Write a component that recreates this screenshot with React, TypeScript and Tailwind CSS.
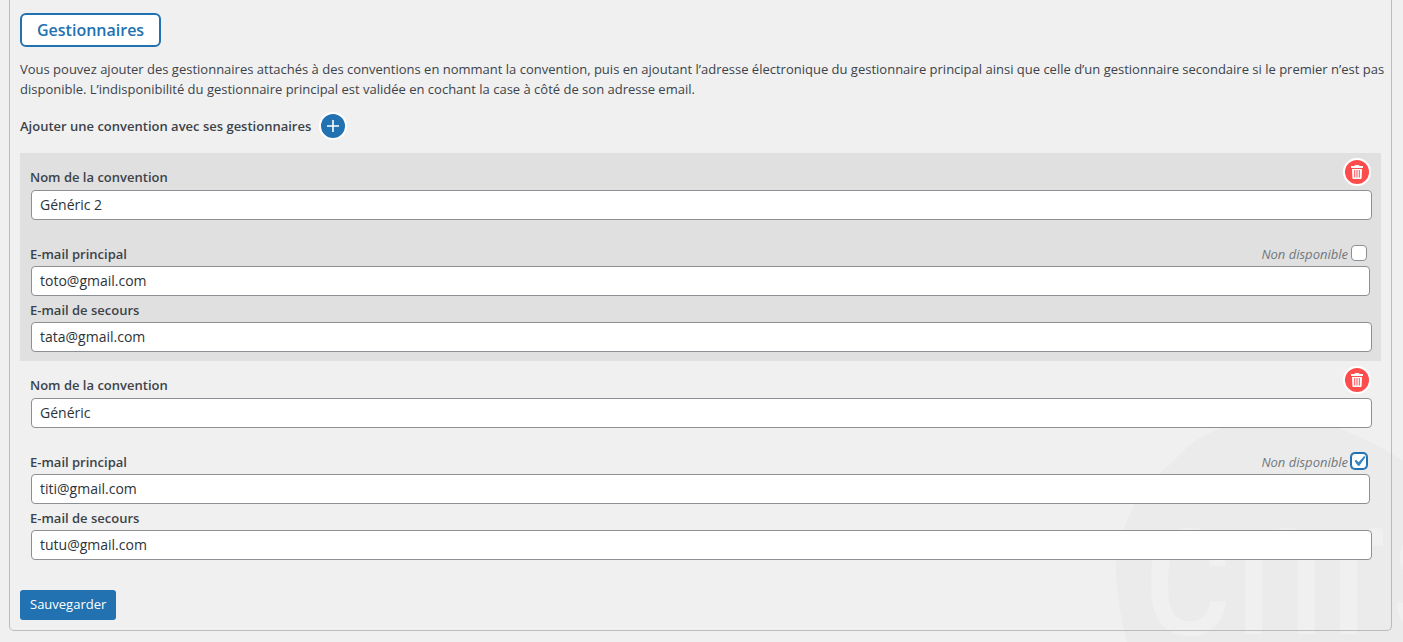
import { useState } from 'react';

type Convention = { id: number; name: string; main: string; backup: string; unavailable: boolean };

const initial: Convention[] = [
  { id: 1, name: 'Généric 2', main: 'toto@gmail.com', backup: 'tata@gmail.com', unavailable: false },
  { id: 2, name: 'Généric', main: 'titi@gmail.com', backup: 'tutu@gmail.com', unavailable: true },
];

const inputClass =
  'block h-[30px] w-full rounded-sm border border-[#8c8f94] bg-white px-2 pb-0.5 text-sm text-[#2c3338] outline-none';
const labelClass = 'text-[13px] leading-5 font-semibold';

function Watermark() {
  return (
    <svg aria-hidden="true" className="absolute right-0 bottom-0 h-[242px] w-[303px]" viewBox="0 0 303 242">
      <path
        fill="#ebebeb"
        d="M27 242C22 222 16 194 16 170C16 149 24 125 33 107C43 88 53 78 67 67C78 57 88 45 100 38C122 25 150 20 178 20C203 20 222 23 240 29C265 38 287 50 303 61V242Z"
      />
      <text x="42" y="234" fill="#f0f0f0" className="font-['Roboto_Condensed','Roboto',sans-serif] text-[196px] font-normal">
        cnrs
      </text>
    </svg>
  );
}

function TrashIcon() {
  return (
    <svg aria-hidden="true" className="size-4" viewBox="0 0 16 16" fill="#fff">
      <path
        fillRule="evenodd"
        d="M6 1h4l.5 1H14v2H2V2h3.500zM3 5h10l-.4 9.200q-.1.800-.9.800H4.300q-.8 0-.9-.8zM5.200 6v7.500h1V6zM7.500 6v7.500h1V6zM9.800 6v7.500h1V6z"
      />
    </svg>
  );
}

function ConventionBlock({ item, shaded, onDelete }: { item: Convention; shaded: boolean; onDelete: () => void }) {
  const id = `convention-${item.id}`;
  return (
    <div className={`${shaded ? 'bg-[#e0e0e0]' : ''} pt-[5px] pr-[9px] pb-[9px] pl-2.5`}>
      <div className="flex h-8 items-start justify-between pr-px">
        <label htmlFor={`${id}-name`} className={`${labelClass} mt-[9px]`}>
          Nom de la convention
        </label>
        <button
          type="button"
          aria-label="Supprimer"
          onClick={onDelete}
          className="flex size-7 items-center justify-center rounded-full border-2 border-white bg-[#ff4d4d]"
        >
          <TrashIcon />
        </button>
      </div>
      <div className="pl-px">
        <input id={`${id}-name`} type="text" defaultValue={item.name} className={inputClass} />
      </div>
      <div className="mt-6 mb-0.5 flex h-5 items-center justify-between pr-[5px]">
        <label htmlFor={`${id}-main`} className={labelClass}>
          E-mail principal
        </label>
        <div className="flex items-center gap-[3px]">
          <label htmlFor={`${id}-off`} className="text-[13px] leading-5 text-[#72777c] italic">
            Non disponible
          </label>
          <span className="mb-0.5 grid size-4">
            <input
              id={`${id}-off`}
              type="checkbox"
              defaultChecked={item.unavailable}
              className="peer col-start-1 row-start-1 size-4 appearance-none rounded-sm border border-[#8c8f94] bg-white checked:border-[#2271b1] checked:ring-1 checked:ring-[#2271b1]"
            />
            <svg
              aria-hidden="true"
              viewBox="2.4 2 15.2 15.2"
              className="pointer-events-none invisible col-start-1 row-start-1 size-4 peer-checked:visible"
            >
              <path fill="#3582c4" d="M14.830 4.890l1.340.940-5.810 8.380H9.020L5.780 9.670l1.340-1.250 2.570 2.400z" />
            </svg>
          </span>
        </div>
      </div>
      <div className="pr-0.5 pl-px">
        <input id={`${id}-main`} type="email" defaultValue={item.main} className={inputClass} />
      </div>
      <div className="mt-1 mb-0.5 flex">
        <label htmlFor={`${id}-backup`} className={labelClass}>
          E-mail de secours
        </label>
      </div>
      <div className="pl-px">
        <input id={`${id}-backup`} type="email" defaultValue={item.backup} className={inputClass} />
      </div>
    </div>
  );
}

export default function App() {
  const [items, setItems] = useState(initial);
  const add = () =>
    setItems((list) => [{ id: Date.now(), name: '', main: '', backup: '', unavailable: false }, ...list]);

  return (
    <div className="relative min-h-screen overflow-hidden bg-[#f0f0f0] pr-[11px] pb-[11px] pl-[9px] font-['Open_Sans',sans-serif] text-[#3c434a]">
      <Watermark />
      <form
        onSubmit={(e) => e.preventDefault()}
        className="relative rounded-b-[5px] border border-t-0 border-[#bbbbbb] px-2.5 pt-[13px] pb-2.5"
      >
        <h2 className="flex h-[34px] w-fit items-center rounded-md border-2 border-[#2271b1] bg-white px-[15px] text-base font-semibold text-[#2271b1]">
          Gestionnaires
        </h2>
        <p className="mt-3 -mr-2 text-[13px] leading-5">
          Vous pouvez ajouter des gestionnaires attachés à des conventions en nommant la convention, puis en ajoutant
          l’adresse électronique du gestionnaire principal ainsi que celle d’un gestionnaire secondaire si le premier
          n’est pas disponible. L’indisponibilité du gestionnaire principal est validée en cochant la case à côté de son
          adresse email.
        </p>
        <div className="mt-[13px] flex items-center gap-2">
          <span className={labelClass}>Ajouter une convention avec ses gestionnaires</span>
          <button
            type="button"
            aria-label="Ajouter une convention"
            onClick={add}
            className="flex size-7 items-center justify-center rounded-full border-2 border-white bg-[#2271b1]"
          >
            <svg aria-hidden="true" className="size-3" viewBox="0 0 12 12" stroke="#fff" strokeWidth="1.6">
              <path d="M6 0v12M0 6h12" />
            </svg>
          </button>
        </div>
        <div className="mt-[13px]">
          {items.map((item, i) => (
            <ConventionBlock
              key={item.id}
              item={item}
              shaded={i % 2 === 0}
              onDelete={() => setItems((list) => list.filter((c) => c.id !== item.id))}
            />
          ))}
        </div>
        <button type="submit" className="mt-[21px] block h-[30px] rounded-[3px] bg-[#2271b1] px-2.5 text-[13px] text-white">
          Sauvegarder
        </button>
      </form>
    </div>
  );
}
